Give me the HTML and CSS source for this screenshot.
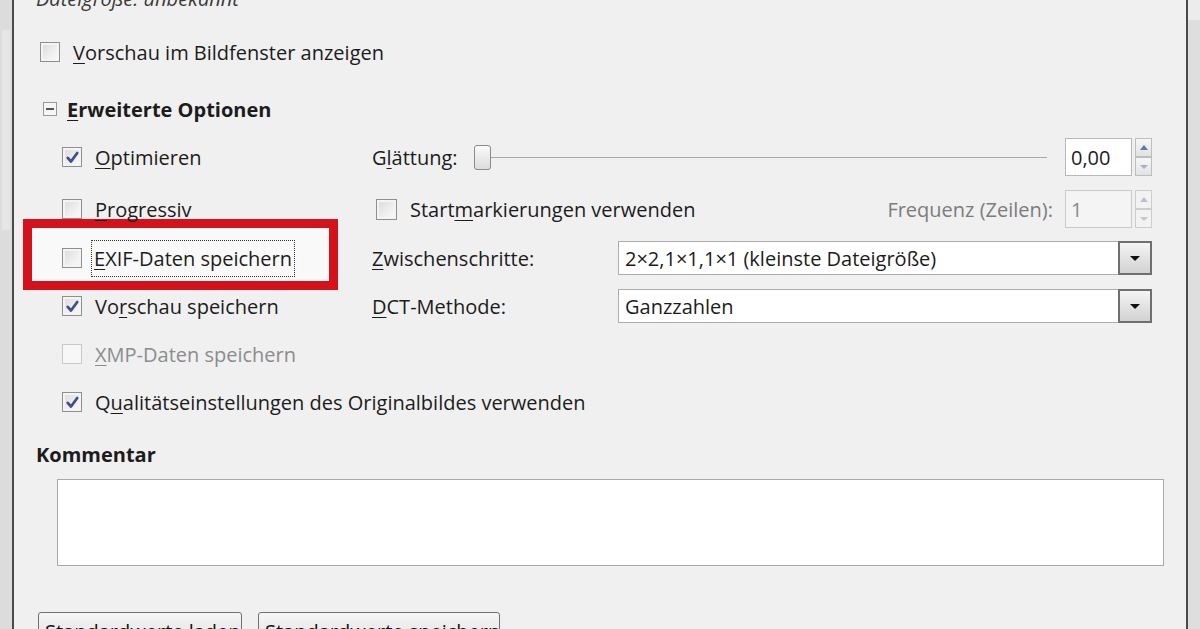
FILE: index.html
```html
<!DOCTYPE html>
<html lang="de">
<head>
<meta charset="utf-8">
<title>JPEG exportieren</title>
<link rel="stylesheet" href="styles.css">
</head>
<body>
<div class="frame">
  <div class="edge edge-left"><div class="edge-glow"></div></div>
  <main class="dialog">
    <div class="filesize">Dateigröße: unbekannt</div>

    <label class="check-row top-row">
      <span class="cb"></span>
      <span><u>V</u>orschau im Bildfenster anzeigen</span>
    </label>

    <div class="section-head">
      <span class="expander"><span class="minus"></span></span>
      <span class="head-text"><u>E</u>rweiterte Optionen</span>
    </div>

    <div class="options">
      <div class="opt-row r1">
        <label class="left check-row"><span class="cb checked"><svg viewBox="0 0 12 12"><path d="M2.2 6.3 L4.8 9.2 L9.8 2.4" /></svg></span><span><u>O</u>ptimieren</span></label>
        <div class="right">
          <span class="lbl-g">G<span class="ul">l</span>ättung:</span>
          <div class="slider"><span class="handle"></span><span class="track"></span></div>
          <div class="spin"><span class="spin-field">0,00</span><span class="spin-btns"><span class="sb up"></span><span class="sb down"></span></span></div>
        </div>
      </div>

      <div class="opt-row r2">
        <label class="left check-row"><span class="cb"></span><span><u>P</u>rogressiv</span></label>
        <div class="right">
          <label class="check-row start"><span class="cb"></span><span>Start<u>m</u>arkierungen verwenden</span></label>
          <span class="freq">Frequenz (Zeilen):</span>
          <div class="spin disabled"><span class="spin-field">1</span><span class="spin-btns"><span class="sb up"></span><span class="sb down"></span></span></div>
        </div>
      </div>

      <div class="opt-row r3">
        <label class="left check-row"><span class="cb"></span><span class="focus"><u>E</u>XIF-Daten speichern</span></label>
        <div class="right">
          <span class="lbl"><u>Z</u>wischenschritte:</span>
          <div class="combo"><span class="combo-text">2×2,1×1,1×1 (kleinste Dateigröße)</span><span class="combo-btn"><span class="tri"></span></span></div>
        </div>
      </div>

      <div class="opt-row r4">
        <label class="left check-row"><span class="cb checked"><svg viewBox="0 0 12 12"><path d="M2.2 6.3 L4.8 9.2 L9.8 2.4" /></svg></span><span>Vo<u>r</u>schau speichern</span></label>
        <div class="right">
          <span class="lbl"><u>D</u>CT-Methode:</span>
          <div class="combo"><span class="combo-text">Ganzzahlen</span><span class="combo-btn"><span class="tri"></span></span></div>
        </div>
      </div>

      <div class="opt-row r5">
        <label class="left check-row disabled"><span class="cb"></span><span><u>X</u>MP-Daten speichern</span></label>
      </div>

      <div class="opt-row r6">
        <label class="left check-row wide"><span class="cb checked"><svg viewBox="0 0 12 12"><path d="M2.2 6.3 L4.8 9.2 L9.8 2.4" /></svg></span><span>Q<u>u</u>alitätseinstellungen des Originalbildes verwenden</span></label>
      </div>
    </div>

    <div class="comment-label">Kommentar</div>
    <div class="comment-box"></div>

    <div class="buttons">
      <button class="btn b1">Standardwerte laden</button>
      <button class="btn b2">Standardwerte speichern</button>
    </div>

    <div class="highlight"></div>
  </main>
  <div class="edge edge-right"><div class="edge-top"></div></div>
</div>
</body>
</html>
```

FILE: styles.css
```css
* { box-sizing: border-box; }
html, body { margin: 0; padding: 0; }
body {
  width: 1200px;
  height: 629px;
  overflow: hidden;
  background: #f0f0f0;
  font-family: "Open Sans", "Noto Sans", sans-serif;
  font-size: 20px;
  color: #1c1c1c;
}
u { text-decoration: underline; text-underline-offset: 3px; text-decoration-thickness: 1px; }
.ul { text-decoration: underline; text-underline-offset: 3px; text-decoration-thickness: 1px; }

.frame { display: flex; height: 629px; }

.edge { flex: none; position: relative; background: #dcdcdc; }
.edge-left { width: 14px; border-right: 2px solid #4a4a4a; }
.edge-glow { margin: 30px 0 0 2px; width: 8px; height: 200px; background: #e6e6e6; }
.edge-right { width: 14px; border-left: 2px solid #4a4a4a; background: #dedede; }
.edge-top { height: 20px; background: #ececec; }

.dialog {
  flex: 1;
  position: relative;
  z-index: 0;
  padding-left: 22px;
  display: flex;
  flex-direction: column;
  align-items: flex-start;
}
.dialog > * { flex-shrink: 0; }

.filesize {
  font-style: italic;
  color: #3a3a3a;
  line-height: 24px;
  height: 24px;
  margin-top: -13px;
}

.check-row { display: flex; align-items: center; gap: 13px; }
.cb {
  flex: none;
  width: 20px; height: 20px;
  border: 1px solid #8e8f8f;
  background: linear-gradient(135deg, #d9d9d9 0%, #eeeeee 55%, #fbfbfb 100%);
  box-shadow: inset 0 0 0 2px #f4f4f4;
  display: flex; align-items: center; justify-content: center;
}
.cb svg { width: 15px; height: 15px; }
.cb svg path { fill: none; stroke: #3d4f8f; stroke-width: 2.2; stroke-linecap: round; stroke-linejoin: round; }

.top-row { margin-top: 21px; height: 40px; margin-left: 4px; }

.section-head { display: flex; align-items: center; height: 30px; margin-top: 22px; margin-left: 7px; gap: 10px; }
.expander {
  width: 14px; height: 14px; border: 1px solid #9a9a9a; background: #f6f6f6;
  display: flex; align-items: center; justify-content: center;
}
.minus { width: 8px; height: 2px; background: #555; }
.head-text { font-weight: 700; }

.options { margin-top: 6px; padding-left: 26px; width: 1116px; display: flex; flex-direction: column; }
.opt-row { display: flex; align-items: center; }
.r1 { height: 54px; }
.r2 { height: 50px; }
.r3, .r4, .r5, .r6 { height: 48px; }
.left { width: 310px; flex: none; }
.left.wide { width: auto; }
.right { flex: 1; display: flex; align-items: center; }

.lbl-g { width: 102px; flex: none; }
.slider { flex: 1; position: relative; height: 26px; display: flex; align-items: center; margin-right: 16px; }
.handle {
  flex: none;
  width: 17px; height: 25px;
  border: 1px solid #8a8a8a; border-radius: 3px;
  background: linear-gradient(#fafafa, #dcdcdc);
}
.track { flex: 1; height: 1px; background: #a9a9a9; margin-right: 2px; }

.spin { display: flex; align-items: stretch; gap: 3px; height: 38px; }
.spin-field {
  width: 67px; background: #fff; border: 1px solid #b5b8bd;
  padding-left: 5px; display: flex; align-items: center;
}
.spin-btns { width: 17px; display: flex; flex-direction: column; }
.sb {
  flex: 1; border: 1px solid #bdbdbd; background: linear-gradient(#f7f7f7, #e2e2e2);
  display: flex; align-items: center; justify-content: center; position: relative;
}
.sb.up { flex: 0 0 19px; }
.sb::after { content: ""; width: 0; height: 0; border-left: 4px solid transparent; border-right: 4px solid transparent; }
.sb.up::after { border-bottom: 5px solid #5f7aa0; }
.sb.down::after { border-top: 4px solid #a3b2c7; }
.spin.disabled .spin-field { background: #f4f4f4; border-color: #cacaca; color: #8a8a8a; }
.spin.disabled .sb { border-color: #cdcdcd; background: #f2f2f2; }
.spin.disabled .sb.up::after { border-bottom-color: #b8c1cd; }
.spin.disabled .sb.down::after { border-top-color: #c0c8d2; }

.start { margin-left: 4px; gap: 13px; }
.start .cb { width: 21px; height: 21px; }
.freq { margin-left: auto; margin-right: 12px; color: #7c7c7c; }

.lbl { width: 246px; flex: none; }
.combo {
  flex: 1; height: 34px; background: #fff; border: 1px solid #adadad;
  display: flex; align-items: stretch;
}
.combo-text { flex: 1; padding-left: 6px; display: flex; align-items: center; }
.combo-btn {
  width: 34px; margin: -1px -1px -1px 0; border: 2px solid #6f6f6f;
  background: linear-gradient(#f4f4f4, #d2d2d2);
  display: flex; align-items: center; justify-content: center;
}
.tri { width: 0; height: 0; border-left: 5px solid transparent; border-right: 5px solid transparent; border-top: 5px solid #111; }

.focus { outline: 1px dotted #333; outline-offset: 0; padding: 4px 2px; margin-left: -3px; }

.disabled { color: #8c8c8c; }
.disabled .cb { border-color: #c8c8c8; background: #f7f7f7; box-shadow: none; }

.comment-label { font-weight: 700; margin-top: 17px; height: 24px; line-height: 24px; }
.comment-box { margin-top: 12px; margin-left: 21px; width: 1107px; height: 87px; background: #fff; border: 1px solid #a9a9a9; }

.buttons { display: flex; gap: 16px; margin-top: 46px; margin-left: 2px; }
.btn {
  font: inherit; color: #111; height: 36px; padding: 3px 0 0 6px; text-align: left; white-space: nowrap;
  border: 1px solid #707070; border-radius: 3px;
  background: linear-gradient(#f6f6f6, #dedede);
}
.b1 { width: 204px; }
.b2 { width: 242px; }

.highlight {
  position: absolute; left: 9px; top: 219px; width: 315px; height: 71px;
  border: 9px solid #d3121b;
  background: #f9f9f9;
  z-index: -1;
  pointer-events: none;
}
```
